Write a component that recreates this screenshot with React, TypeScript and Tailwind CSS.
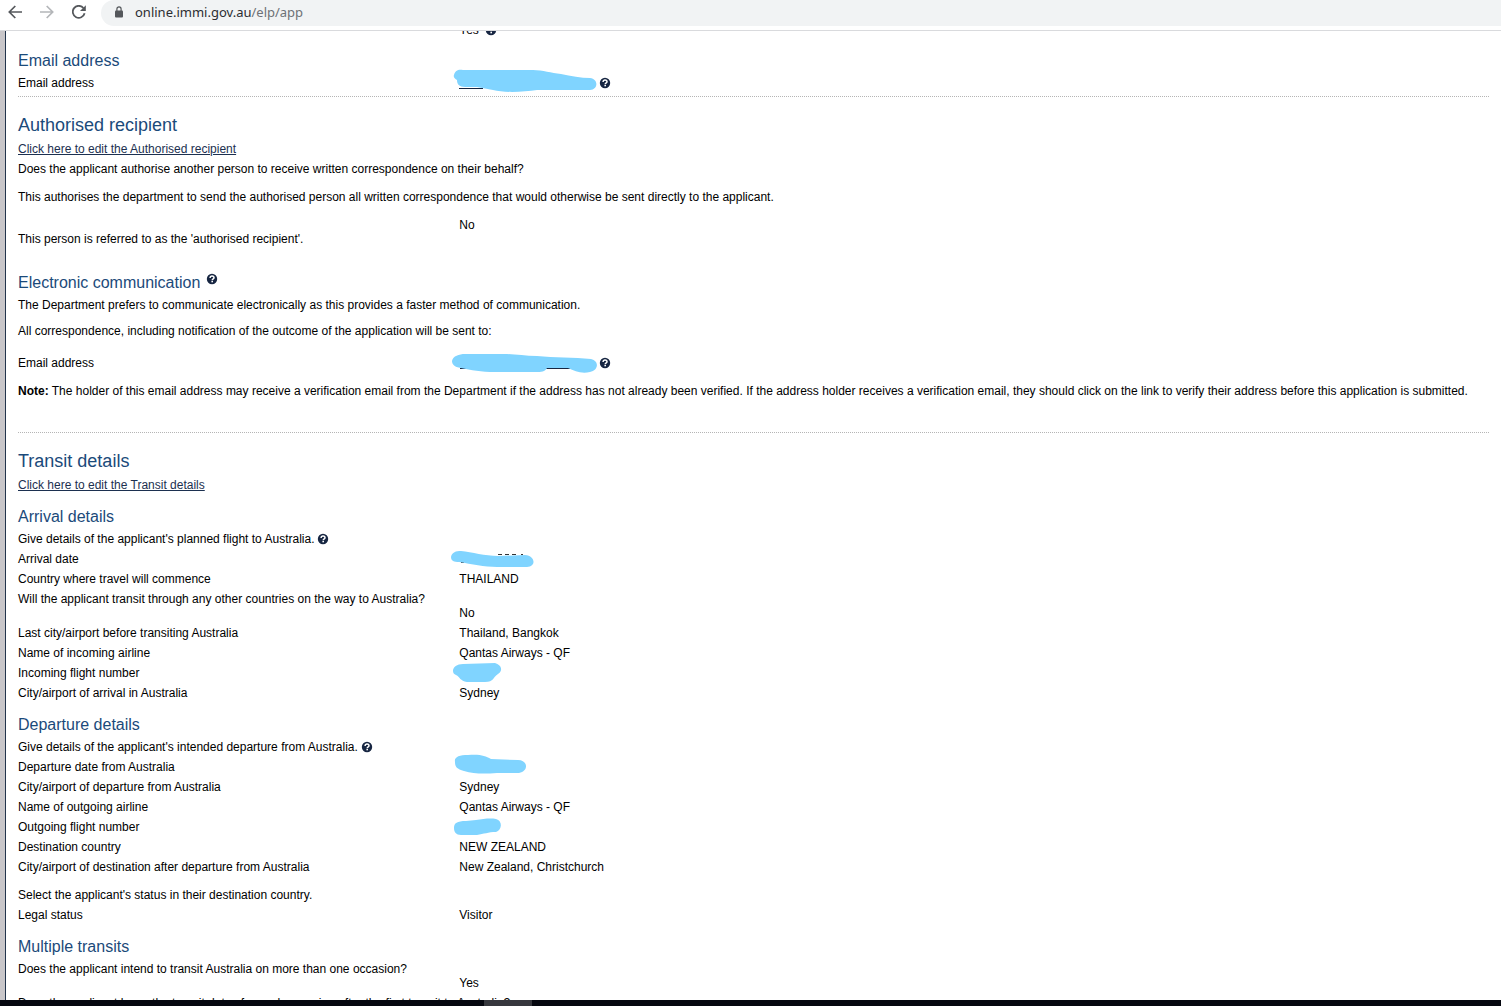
import type { ReactNode } from "react";

function Help({ raised = false }: { raised?: boolean }) {
  return (
    <button
      type="button"
      aria-label="Help"
      className={raised ? "mb-2 ml-[7px] block size-[10px] shrink-0" : "ml-1 block size-[10px] shrink-0"}
    >
      <svg viewBox="0 0 10 10" className="block size-full overflow-visible">
        <circle cx="5" cy="5" r="5.2" fill="#172642" />
        <path d="M3.1 3.9C3.1 2.7 3.9 2 5 2s2 .7 2 1.8C7 4.9 5.2 4.9 5.2 6.2" fill="none" stroke="#fff" strokeWidth="1.5" />
        <rect x="4.4" y="6.9" width="1.6" height="1.4" fill="#fff" />
      </svg>
    </button>
  );
}

function Scribble({ d, ink }: { d: string; ink?: ReactNode }) {
  return (
    <svg aria-hidden="true" width="160" height="32" viewBox="-10 -6 160 32" className="absolute -left-[10px] -top-[6px] max-w-none">
      {ink}
      <path d={d} fill="#80d4ff" />
    </svg>
  );
}

function Title({ children }: { children: ReactNode }) {
  return <h1 className="text-[18px] leading-[22px] text-[#1b4a7a]">{children}</h1>;
}

function Heading({ children }: { children: ReactNode }) {
  return <h2 className="mb-px flex items-center text-[16px] leading-[22px] text-[#1b4a7a]">{children}</h2>;
}

function Line({ children }: { children: ReactNode }) {
  return <p className="leading-5">{children}</p>;
}

function Row({ label, children }: { label: string; children: ReactNode }) {
  return (
    <div className="flex h-5 items-center">
      <dt className="w-[30%]">{label}</dt>
      <dd className="relative flex h-5 items-center">{children}</dd>
    </div>
  );
}

function Question({ label, value }: { label: string; value: string }) {
  return (
    <div className="py-[3px] leading-[14px]">
      <dt>{label}</dt>
      <dd className="ml-[30%]">{value}</dd>
    </div>
  );
}

function EditLink({ children }: { children: ReactNode }) {
  return (
    <p className="mt-[3px] leading-5">
      <a href="#edit" className="text-[#1c3050] underline">{children}</a>
    </p>
  );
}

function Toolbar() {
  return (
    <header className="flex h-[31px] shrink-0 items-start border-b border-[#d9dadd] bg-white">
      <div className="flex h-6 items-center gap-[18px] pl-[8px] pr-[15px]">
        <button type="button" aria-label="Back">
          <svg width="14" height="14" viewBox="0 0 14 14" fill="none" stroke="#55585c" strokeWidth="1.7">
            <path d="M14 7H1.3M7.3 1 1.3 7l6 6" />
          </svg>
        </button>
        <button type="button" aria-label="Forward">
          <svg width="14" height="14" viewBox="0 0 14 14" fill="none" stroke="#b4b6b9" strokeWidth="1.7">
            <path d="M0 7h12.7M6.7 1l6 6-6 6" />
          </svg>
        </button>
        <button type="button" aria-label="Reload">
          <svg width="14" height="14" viewBox="0 0 14 14">
            <path d="M12.6 8.3A6 6 0 1 1 11.4 3" fill="none" stroke="#55585c" strokeWidth="1.8" />
            <path d="M13.8.2V6H8z" fill="#55585c" />
          </svg>
        </button>
      </div>
      <div className="flex h-[26px] flex-1 items-center rounded-l-full bg-[#f1f3f4] pb-[2px] pl-[14px]">
        <svg aria-hidden="true" width="8" height="12" viewBox="0 0 8 12">
          <path d="M1.9 5V2.9a2.1 2.1 0 0 1 4.2 0V5" fill="none" stroke="#54575b" strokeWidth="1.2" />
          <rect y="4.5" width="8" height="7" rx="1" fill="#54575b" />
        </svg>
        <a href="#address" className="ml-3 font-['Noto_Sans','Open_Sans',sans-serif] text-[13px] leading-5 text-[#2b2d31]">
          online.immi.gov.au<span className="text-[#6d7176]">/elp/app</span>
        </a>
      </div>
    </header>
  );
}

export default function App() {
  return (
    <div className="flex h-screen flex-col bg-white font-['Liberation_Sans',Arial,sans-serif] text-[12px] leading-[14px] text-black">
      <Toolbar />
      <div className="flex min-h-0 flex-1 overflow-hidden">
        <div className="w-[6px] shrink-0 border-r border-[#22344c] bg-[#c8c6c9]" />
        <main className="min-w-0 flex-1 pl-3 pr-3">
          <div className="flex h-2 items-end overflow-hidden">
            <div className="ml-[30%] flex h-[19px] items-center gap-[3px]">
              Yes <Help />
            </div>
          </div>

          <section className="mt-[11px] border-b border-dotted border-[#b5b5b5] pb-[3px]">
            <Heading>Email address</Heading>
            <dl>
              <Row label="Email address">
                <span className="w-[137px]">
                  <Scribble
                    ink={<path d="M0 15.5H24" stroke="#172642" />}
                    d="M-5 2C-4 -3 0 -4 4 -3L74 -3C84 -3 92 0 102 1C112 3 122 5 131 5C140 6 139 17 131 17L78 17C65 19 45 20 34 17L18 14L6 14C0 14 -2 11 -2 7C-4 6 -6 4 -5 2Z"
                  />
                </span>
                <Help />
              </Row>
            </dl>
          </section>

          <section className="mt-[17px] border-b border-dotted border-[#b5b5b5] pb-[31px]">
            <Title>Authorised recipient</Title>
            <EditLink>Click here to edit the Authorised recipient</EditLink>
            <Line>Does the applicant authorise another person to receive written correspondence on their behalf?</Line>
            <div className="mt-2">
              <Line>This authorises the department to send the authorised person all written correspondence that would otherwise be sent directly to the applicant.</Line>
            </div>
            <p className="ml-[30%] mt-[11px]">No</p>
            <p>This person is referred to as the 'authorised recipient'.</p>

            <div className="mt-[26px]">
              <Heading>
                Electronic communication
                <Help raised />
              </Heading>
            </div>
            <Line>The Department prefers to communicate electronically as this provides a faster method of communication.</Line>
            <div className="mt-[6px]">
              <Line>All correspondence, including notification of the outcome of the application will be sent to:</Line>
            </div>
            <dl className="mb-2 mt-3">
              <Row label="Email address">
                <span className="w-[137px]">
                  <Scribble
                    ink={<path d="M1 15.5H112" stroke="#172642" />}
                    d="M-7 8C-6 3 0 1 6 1L45 1C55 1 65 3 78 3C95 5 115 4 132 6C141 8 139 18 131 19C122 21 116 18 109 15L88 15C86 19 82 19 77 19L36 19C22 19 12 17 2 15C-5 14 -7 11 -7 8Z"
                  />
                </span>
                <Help />
              </Row>
            </dl>
            <Line>
              <strong>Note:</strong> The holder of this email address may receive a verification email from the Department if the address has not already been verified. If the address holder receives a verification email, they should click on the link to verify their address before this application is submitted.
            </Line>
          </section>

          <section className="mt-[17px]">
            <Title>Transit details</Title>
            <EditLink>Click here to edit the Transit details</EditLink>

            <div className="mt-[11px]">
              <Heading>Arrival details</Heading>
              <div className="flex items-center">
                <Line>Give details of the applicant's planned flight to Australia.</Line>
                <Help />
              </div>
              <dl>
                <Row label="Arrival date">
                  <Scribble
                    ink={<path d="M39 5.5h4m3 0h4m3 0h4m5 0h2M2 13.5h3" stroke="#333" />}
                    d="M-8 8C-7 3 -3 2 2 2C13 3 26 7 39 7L66 6C77 7 77 18 68 18L38 18C25 18 13 15 0 13C-5 13 -8 12 -8 8Z"
                  />
                </Row>
                <Row label="Country where travel will commence">THAILAND</Row>
                <Question label="Will the applicant transit through any other countries on the way to Australia?" value="No" />
                <Row label="Last city/airport before transiting Australia">Thailand, Bangkok</Row>
                <Row label="Name of incoming airline">Qantas Airways - QF</Row>
                <Row label="Incoming flight number">
                  <Scribble d="M-6 8C-6 4 -2 1 4 1L36 0C43 2 44 8 39 11C34 14 35 19 26 19L8 19C1 18 1 14 -3 12C-5 11 -6 10 -6 8Z" />
                </Row>
                <Row label="City/airport of arrival in Australia">Sydney</Row>
              </dl>
            </div>

            <div className="mt-[11px]">
              <Heading>Departure details</Heading>
              <div className="flex items-center">
                <Line>Give details of the applicant's intended departure from Australia.</Line>
                <Help />
              </div>
              <dl>
                <Row label="Departure date from Australia">
                  <Scribble d="M-4 5C-5 0 0 -2 9 -2C22 -3 26 -1 32 2L59 3C69 3 70 14 60 16L38 16C25 17 15 17 5 14C-2 12 -4 10 -4 5Z" />
                </Row>
                <Row label="City/airport of departure from Australia">Sydney</Row>
                <Row label="Name of outgoing airline">Qantas Airways - QF</Row>
                <Row label="Outgoing flight number">
                  <Scribble d="M-5 11C-5 6 -2 4 7 4L17 3C24 2 31 1 37 2C44 4 43 13 37 15C29 15 25 17 18 18L2 18C-3 18 -5 15 -5 11Z" />
                </Row>
                <Row label="Destination country">NEW ZEALAND</Row>
                <Row label="City/airport of destination after departure from Australia">New Zealand, Christchurch</Row>
              </dl>
              <div className="mt-2">
                <Line>Select the applicant's status in their destination country.</Line>
              </div>
              <dl>
                <Row label="Legal status">Visitor</Row>
              </dl>
            </div>

            <div className="mt-[11px]">
              <Heading>Multiple transits</Heading>
              <dl>
                <Question label="Does the applicant intend to transit Australia on more than one occasion?" value="Yes" />
              </dl>
              <Line>Does the applicant know the transit dates for each occasion after the first transit to Australia?</Line>
            </div>
          </section>
        </main>
      </div>
      <footer className="flex h-[6px] shrink-0 bg-[#05070f]">
        <div className="ml-[484px] w-12 bg-[#36373d]" />
      </footer>
    </div>
  );
}
